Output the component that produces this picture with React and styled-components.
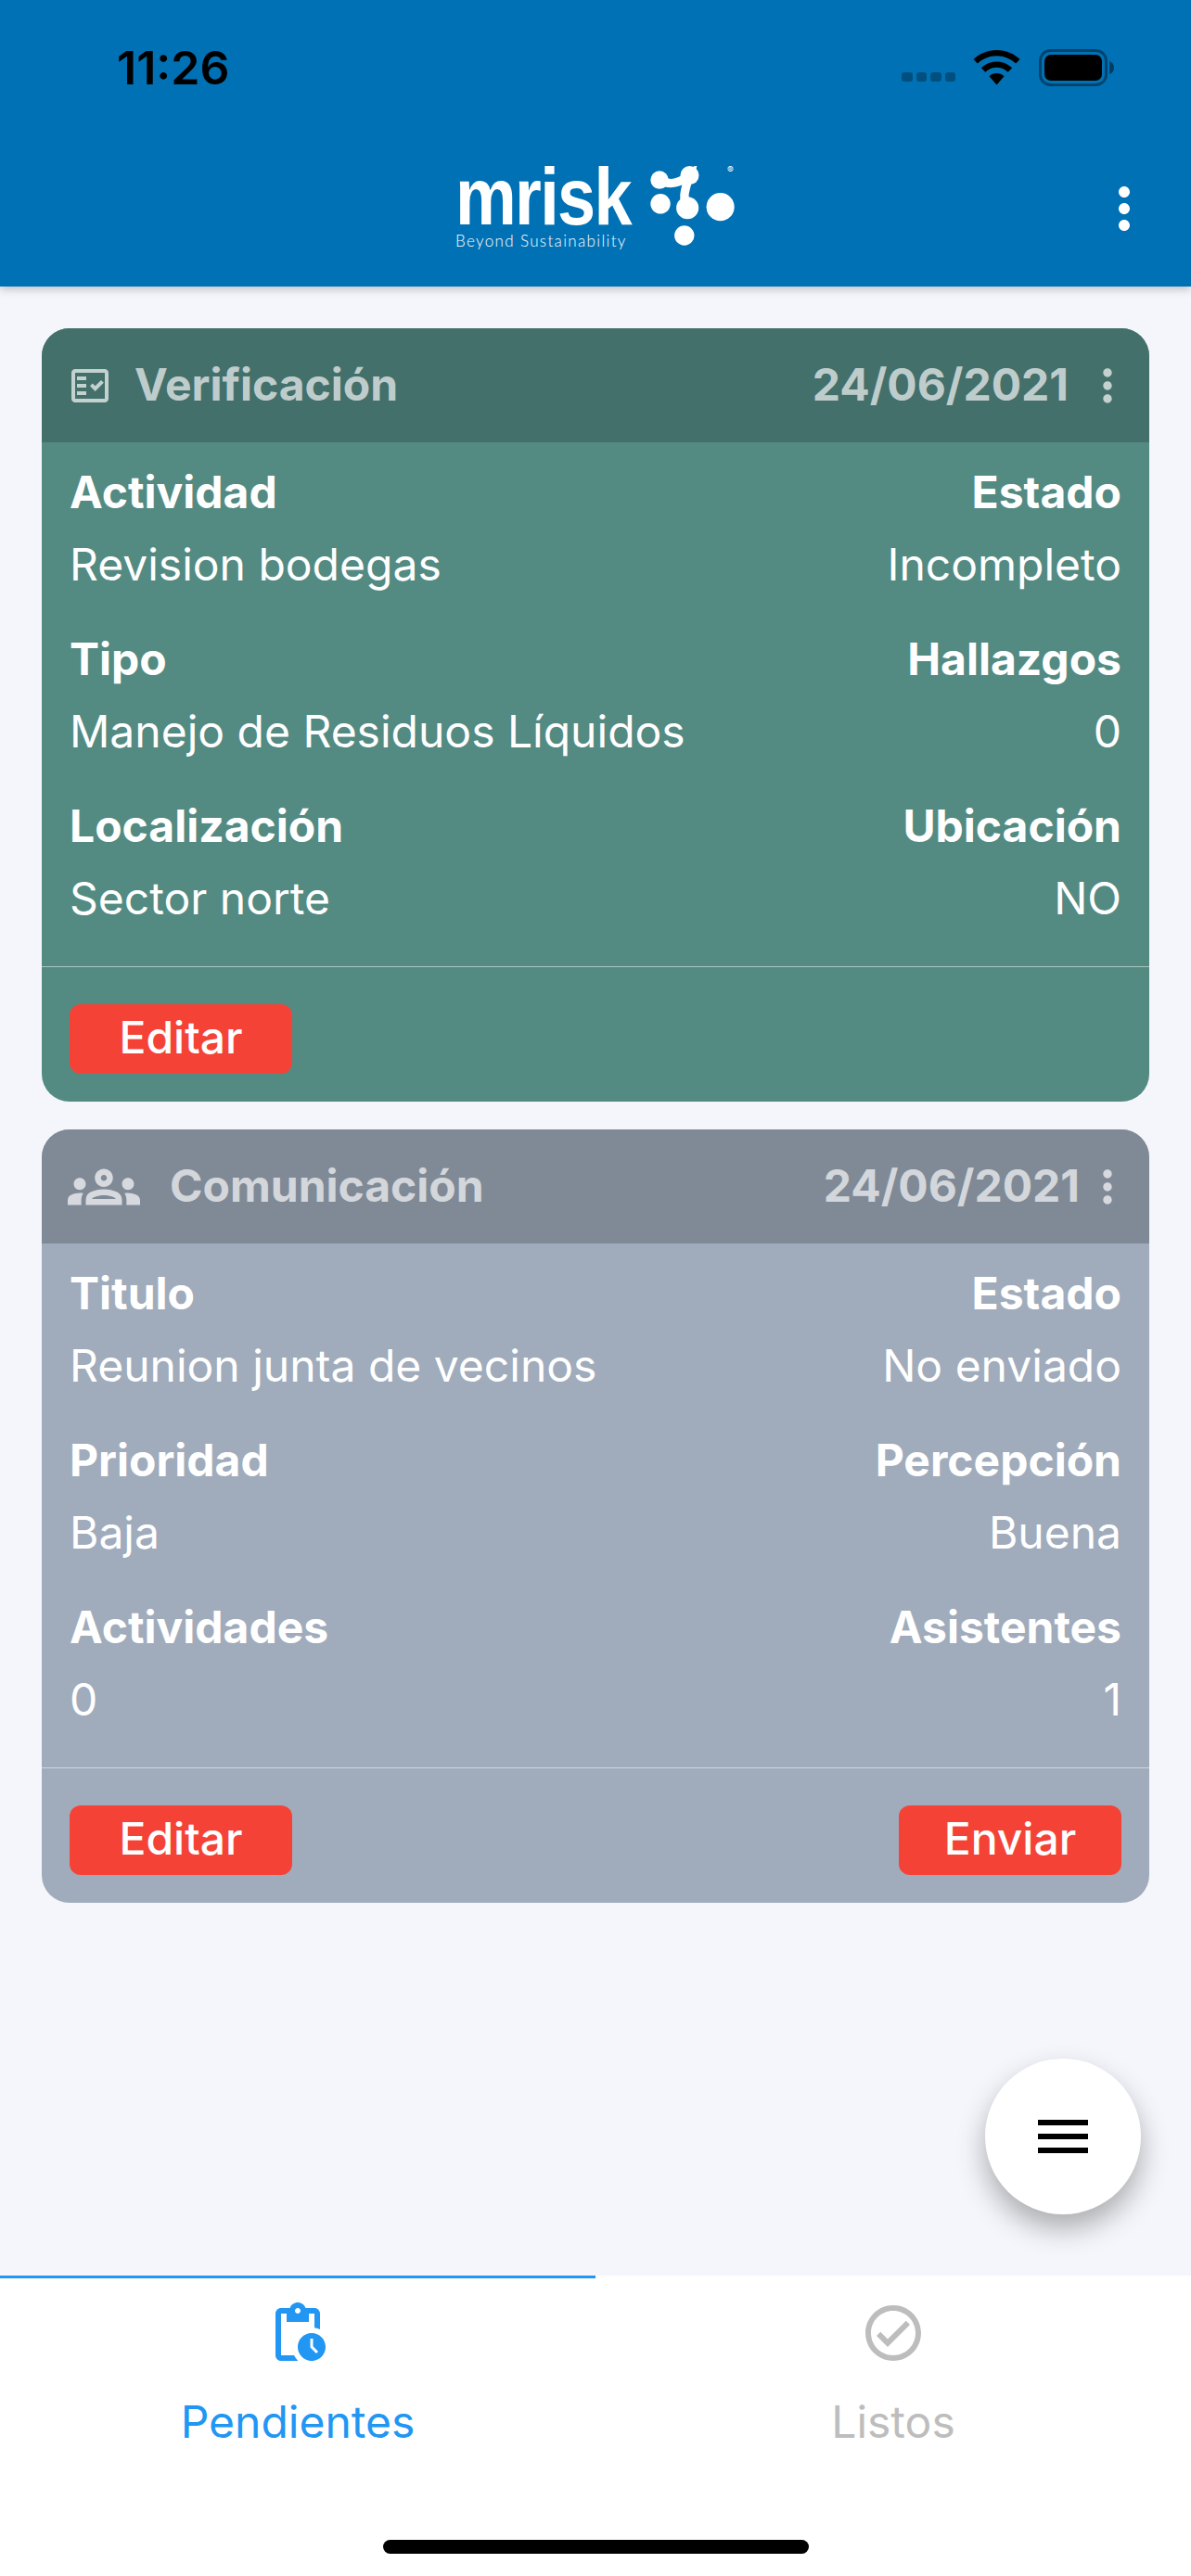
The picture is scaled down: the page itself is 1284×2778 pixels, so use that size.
import React from "react";
import styled, { createGlobalStyle } from "styled-components";
import { MdMoreVert, MdMenu, MdPendingActions, MdOutlineCheckCircle, MdOutlineFactCheck, MdOutlineGroups } from "react-icons/md";

const Global = createGlobalStyle`
  html, body { margin: 0; padding: 0; background: #f4f6fb; }
  * { box-sizing: border-box; }
  body { font-family: Inter, "Liberation Sans", sans-serif; font-optical-sizing: none; font-variation-settings: "opsz" 14; }
`;

const Screen = styled.div`
  width: 1284px; height: 2778px; display: flex; flex-direction: column; overflow: hidden;
  background: #f4f6fb;
`;
const Header = styled.header`
  height: 309px; flex: none; background: #0071b5; position: relative; z-index: 2;
  box-shadow: 0 3px 9px rgba(0,0,0,.22);
`;
const StatusBar = styled.div`
  height: 146px; display: flex; align-items: center; padding: 0 82px 0 126px;
`;
const Time = styled.div`
  font-size: 50px; font-weight: 600; color: #000; flex: 1;
`;
const StatusIcons = styled.div`display: flex; align-items: center;`;
const Signal = styled.div`
  display: flex; gap: 4px; align-items: flex-end; margin-right: 19px; padding-top: 20px;
`;
const SignalBar = styled.span`
  width: 11.5px; height: 10px; border-radius: 3px; background: rgba(0,0,0,.3);
`;
const Toolbar = styled.div`
  height: 163px; display: grid; grid-template-columns: 1fr auto 1fr; align-items: center; padding: 0 36px 6px;
`;
const Logo = styled.div`grid-column: 2; display: flex; align-items: flex-start; gap: 14px; color: #fff;`;
const LogoWords = styled.div`display: flex; flex-direction: column; width: 196px;`;
const Wordmark = styled.div`
  font-family: "Liberation Sans", sans-serif; font-weight: 700; font-size: 88px; line-height: 66px;
  height: 66px; width: 196px; letter-spacing: -2px; transform: scaleX(.84); transform-origin: left center; white-space: nowrap;
`;
const Tagline = styled.div`
  font-family: Lato, sans-serif; font-weight: 300; font-size: 17px; line-height: 20px; letter-spacing: 1.35px; white-space: nowrap; margin-top: 5px;
`;
const HeaderMenu = styled(MdMoreVert)`justify-self: end; color: #fff; display: block;`;

const Main = styled.main`
  flex: 1; position: relative; padding: 45px 45px 0; display: flex; flex-direction: column; gap: 30px;
`;
const Card = styled.section`
  border-radius: 30px; overflow: hidden; background: ${p => p.$body}; color: #fff;
`;
const CardHead = styled.div`
  height: 123px; background: ${p => p.$head}; display: flex; align-items: center; padding: 0 0 0 28px; color: rgba(255,255,255,.68);
`;
const HeadIcon = styled.span`display: flex; margin-right: ${p => p.$gap}px;`;
const HeadTitle = styled.div`flex: 1; font-size: 48px; font-weight: 700; padding-bottom: 3px;`;
const HeadDate = styled.div`font-size: 48px; font-weight: 700; padding-bottom: 3px;`;
const HeadMenu = styled(MdMoreVert)`display: block; margin-left: ${p => p.$gap}px; margin-right: 17px;`;
const CardBody = styled.div`
  padding: 15px 30px 34px; display: grid; grid-template-columns: 1fr auto; row-gap: 24px; border-bottom: 1px solid rgba(255,255,255,.5);
`;
const Field = styled.div`text-align: ${p => (p.$right ? "right" : "left")};`;
const FieldLabel = styled.div`font-size: 48px; font-weight: 700; line-height: 78px;`;
const FieldValue = styled.div`font-size: 48px; font-weight: 400; line-height: 78px;`;
const CardFoot = styled.div`padding: 40px 30px 30px; display: flex; justify-content: space-between;`;
const ActionButton = styled.button`
  width: 240px; height: 75px; border: 0; padding: 0 0 4px; border-radius: 12px; background: #f44336; color: #fff;
  font-family: inherit; font-size: 48px; font-weight: 500; line-height: 70px;
`;
const Fab = styled.button`
  position: absolute; right: 54px; top: 1911px; width: 168px; height: 168px; border-radius: 50%; border: 0; padding: 0;
  background: #fff; color: #000; display: flex; align-items: center; justify-content: center;
  box-shadow: 0 15px 30px rgba(0,0,0,.3);
`;
const TabBar = styled.nav`height: 324px; flex: none; background: #fff; display: flex; flex-direction: column; position: relative;`;
const Tabs = styled.div`display: grid; grid-template-columns: 1fr 1fr;`;
const Tab = styled.div`
  border-top: 3px solid ${p => (p.$active ? "#2196f3" : "transparent")};
  color: ${p => (p.$active ? "#2196f3" : "#bdbdbd")};
  padding-top: 23px; display: flex; flex-direction: column; align-items: center;
`;
const TabLabel = styled.div`font-size: 48px; line-height: 60px; margin-top: 30px;`;
const HomeIndicator = styled.div`
  width: 459px; height: 15px; border-radius: 8px; background: #000; margin: auto auto 24px;
`;

const Wifi = () => (
  <svg width="51" height="38" viewBox="0 0 51 38" style={{ display: "block", marginRight: 20 }}>
    <path d="M25.5 0C15.8 0 7 3.8.5 10l4.4 4.6C10.2 9.4 17.5 6.3 25.5 6.3s15.3 3.1 20.6 8.3l4.4-4.6C44 3.8 35.2 0 25.5 0z" fill="#000" />
    <path d="M25.5 12.5c-6.4 0-12.3 2.5-16.6 6.7l4.4 4.6c3.2-3.1 7.5-5 12.2-5s9 1.9 12.2 5l4.4-4.6c-4.3-4.2-10.2-6.7-16.6-6.7z" fill="#000" />
    <path d="M25.5 25c-3.1 0-5.9 1.2-8 3.2L25.5 37.5l8-9.3c-2.1-2-4.9-3.2-8-3.2z" fill="#000" />
  </svg>
);
const Battery = () => (
  <svg width="82" height="40" viewBox="0 0 82 40" style={{ display: "block" }}>
    <rect x="1.5" y="1.5" width="71" height="37" rx="11" fill="none" stroke="rgba(0,0,0,.4)" strokeWidth="3" />
    <rect x="6" y="6" width="62" height="28" rx="7" fill="#000" />
    <path d="M76 13c3 .8 5 3.5 5 7s-2 6.2-5 7z" fill="rgba(0,0,0,.45)" />
  </svg>
);
const LogoMark = () => (
  <svg width="92" height="87" viewBox="785 90 275 260" style={{ display: "block" }} fill="#fff">
    <path d="M815 135C850 155 880 145 912 120C900 160 885 190 905 225" fill="none" stroke="#fff" strokeWidth="28" strokeLinecap="round" />
    <circle cx="815" cy="135" r="29" />
    <circle cx="912" cy="120" r="30" />
    <circle cx="818" cy="212" r="32" />
    <circle cx="905" cy="225" r="36" />
    <circle cx="1011" cy="222" r="45" />
    <circle cx="895" cy="314" r="32" />
    <text x="1043" y="115" fontSize="30" textAnchor="middle" fontFamily="Inter, sans-serif">®</text>
  </svg>
);

const cards = [
  {
    body: "#538b83", head: "#44706b", title: "Verificación", icon: <MdOutlineFactCheck size={48} />, iconGap: 24, menuGap: 14, actions: ["Editar"],
    fields: [["Actividad", "Revision bodegas"], ["Estado", "Incompleto"], ["Tipo", "Manejo de Residuos Líquidos"], ["Hallazgos", "0"], ["Localización", "Sector norte"], ["Ubicación", "NO"]],
  },
  {
    body: "#a0acbc", head: "#808a96", title: "Comunicación", icon: <MdOutlineGroups size={78} />, iconGap: 32, menuGap: 2, actions: ["Editar", "Enviar"],
    fields: [["Titulo", "Reunion junta de vecinos"], ["Estado", "No enviado"], ["Prioridad", "Baja"], ["Percepción", "Buena"], ["Actividades", "0"], ["Asistentes", "1"]],
  },
];

export default function App() {
  return (
    <Screen>
      <Global />
      <Header>
        <StatusBar>
          <Time>11:26</Time>
          <StatusIcons>
            <Signal>{[0, 1, 2, 3].map(i => <SignalBar key={i} />)}</Signal>
            <Wifi />
            <Battery />
          </StatusIcons>
        </StatusBar>
        <Toolbar>
          <Logo>
            <LogoWords>
              <Wordmark>mrisk</Wordmark>
              <Tagline>Beyond Sustainability</Tagline>
            </LogoWords>
            <LogoMark />
          </Logo>
          <HeaderMenu size={72} />
        </Toolbar>
      </Header>
      <Main>
        {cards.map(c => (
          <Card key={c.title} $body={c.body}>
            <CardHead $head={c.head}>
              <HeadIcon $gap={c.iconGap}>{c.icon}</HeadIcon>
              <HeadTitle>{c.title}</HeadTitle>
              <HeadDate>24/06/2021</HeadDate>
              <HeadMenu size={56} $gap={c.menuGap} />
            </CardHead>
            <CardBody>
              {c.fields.map(([label, value], i) => (
                <Field key={label} $right={i % 2 === 1}>
                  <FieldLabel>{label}</FieldLabel>
                  <FieldValue>{value}</FieldValue>
                </Field>
              ))}
            </CardBody>
            <CardFoot>
              {c.actions.map(a => <ActionButton key={a}>{a}</ActionButton>)}
            </CardFoot>
          </Card>
        ))}
        <Fab><MdMenu size={72} /></Fab>
      </Main>
      <TabBar>
        <Tabs>
          <Tab $active><MdPendingActions size={72} /><TabLabel>Pendientes</TabLabel></Tab>
          <Tab><MdOutlineCheckCircle size={72} /><TabLabel>Listos</TabLabel></Tab>
        </Tabs>
        <HomeIndicator />
      </TabBar>
    </Screen>
  );
}
